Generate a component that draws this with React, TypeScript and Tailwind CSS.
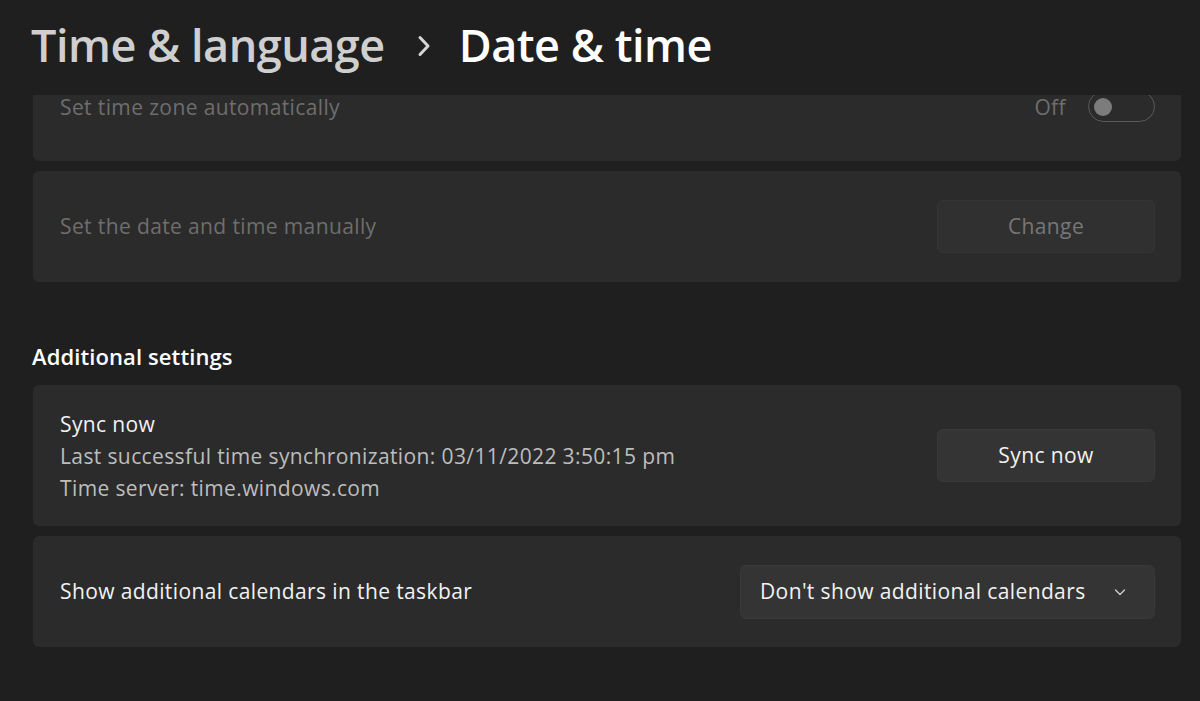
import React from "react";

const font = { fontFamily: '"Open Sans", "Noto Sans", sans-serif' };

function Chevron() {
  return (
    <svg width="14" height="14" viewBox="0 0 14 14" fill="none">
      <path d="M2.5 5 L7 9.5 L11.5 5" stroke="#cfcfcf" strokeWidth="1.3" strokeLinecap="round" strokeLinejoin="round" />
    </svg>
  );
}

function BreadChevron() {
  return (
    <svg width="14" height="22" viewBox="0 0 14 22" fill="none">
      <path d="M3 2.5 L11 11 L3 19.5" stroke="#d6d6d6" strokeWidth="3" strokeLinecap="round" strokeLinejoin="round" />
    </svg>
  );
}

export default function App() {
  return (
    <div className="w-[1200px] h-[701px] bg-[#1f1f1f] overflow-hidden flex flex-col" style={font}>
      <div className="h-[95px] shrink-0 flex items-start pl-[31px] pt-[17px]">
        <div className="flex items-center text-[45px] font-semibold leading-[56px] tracking-[-0.5px]">
          <span className="text-[#cfcfcf]">Time &amp; language</span>
          <span className="ml-[32px] mr-[28px] mt-[2px] flex items-center">
            <BreadChevron />
          </span>
          <span className="text-white">Date &amp; time</span>
        </div>
      </div>
      <div className="pl-[33px] pr-[19px] flex flex-col text-[21px] tracking-[0.38px]">
        <div className="h-[66px] rounded-b-[6px] bg-[#2b2b2b] flex items-start justify-between pl-[27px] pr-[26px]">
          <span className="leading-[22px] text-[#6e6e6e] mt-[1px]">Set time zone automatically</span>
          <div className="flex items-start gap-[22px]">
            <span className="leading-[22px] text-[#6e6e6e] mt-[1px]">Off</span>
            <div className="h-[27px] overflow-hidden flex items-end">
              <div className="w-[67px] h-[31px] rounded-full border-[1.5px] border-[#5a5a5a] flex items-center pl-[5px]">
                <div className="w-[18px] h-[18px] rounded-full bg-[#7c7c7c]" />
              </div>
            </div>
          </div>
        </div>
        <div className="mt-[10px] h-[111px] rounded-[6px] bg-[#2b2b2b] flex items-center justify-between pl-[27px] pr-[26px]">
          <span className="text-[#6e6e6e]">Set the date and time manually</span>
          <div className="w-[218px] h-[53px] rounded-[6px] bg-[#303030] border border-[#353535] flex items-center justify-center text-[#777777]">
            Change
          </div>
        </div>
        <div className="mt-[59px] h-[30px] flex items-center -ml-[1px] text-[22px] font-semibold text-white tracking-[0.1px]">
          Additional settings
        </div>
        <div className="mt-[14px] h-[141px] rounded-[6px] bg-[#2b2b2b] flex items-center justify-between pl-[27px] pr-[26px]">
          <div className="flex flex-col leading-[32px]">
            <span className="text-[#f2f2f2]">Sync now</span>
            <span className="text-[#bdbdbd]">Last successful time synchronization: 03/11/2022 3:50:15 pm</span>
            <span className="text-[#bdbdbd]">Time server: time.windows.com</span>
          </div>
          <div className="w-[218px] h-[53px] rounded-[6px] bg-[#343434] border border-[#393939] flex items-center justify-center text-[#f2f2f2]">
            Sync now
          </div>
        </div>
        <div className="mt-[10px] h-[111px] rounded-[6px] bg-[#2b2b2b] flex items-center justify-between pl-[27px] pr-[26px]">
          <span className="text-[#f2f2f2]">Show additional calendars in the taskbar</span>
          <div className="w-[415px] h-[54px] rounded-[6px] bg-[#343434] border border-[#393939] flex items-center justify-between pl-[19px] pr-[27px] text-[#f2f2f2]">
            <span>Don&apos;t show additional calendars</span>
            <Chevron />
          </div>
        </div>
      </div>
    </div>
  );
}
